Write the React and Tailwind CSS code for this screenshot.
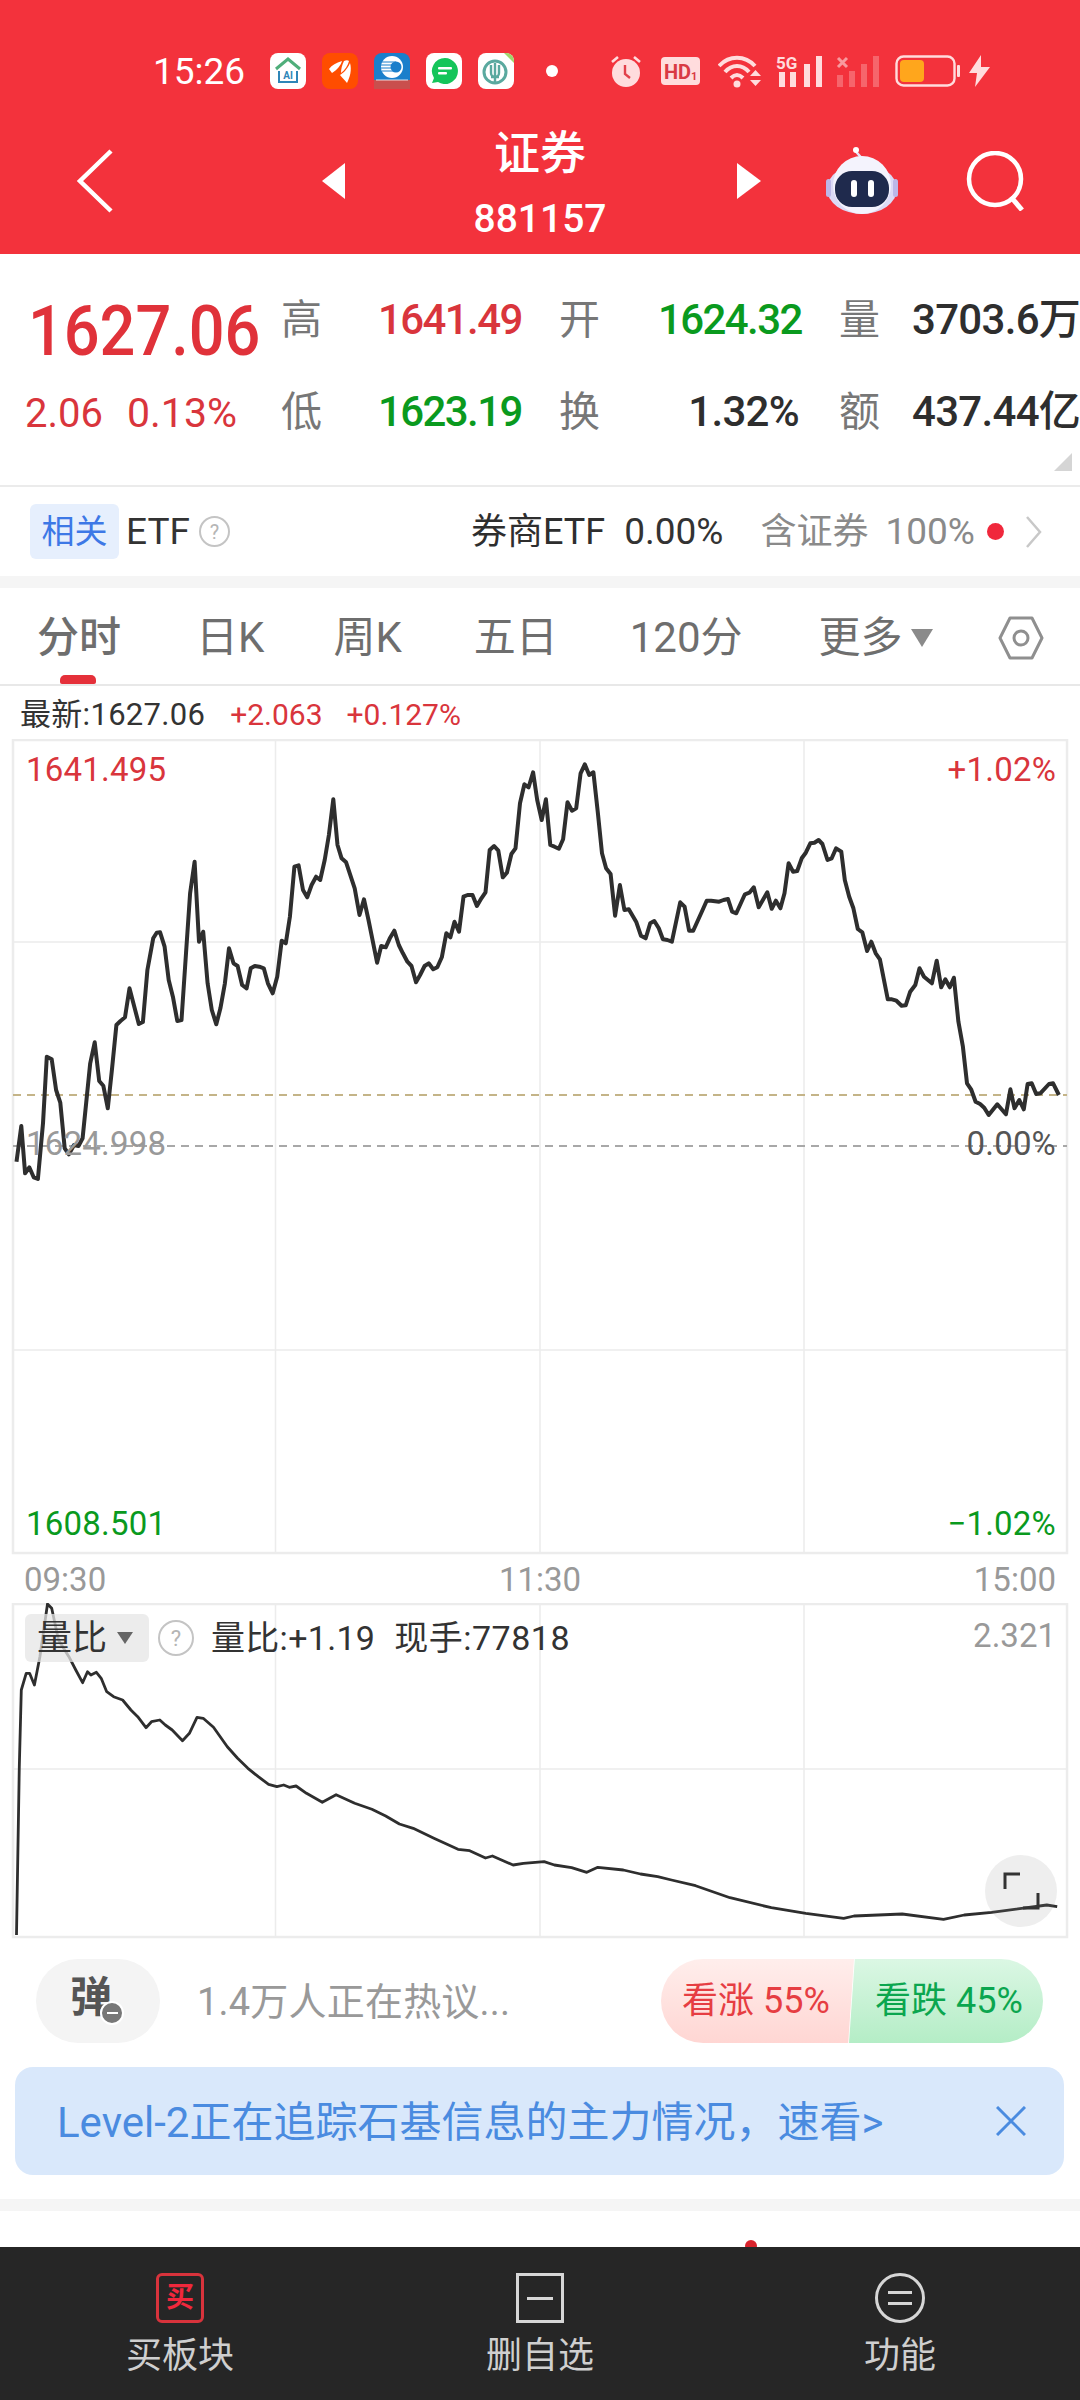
const mainA = [[48,1325],[62,1218],[73,1360],[85,1342],[98,1372],[110,1377],[125,1210],[136,1010],[150,1018],[163,1110],[175,1148],[188,1285],[200,1303],[215,1275],[228,1278],[240,1255],[262,1030],[275,967],[288,1083],[300,1097],[313,1165],[325,1050],[338,915],[350,903],[363,892],[376,805],[390,860],[403,912],[415,906],[428,750],[445,655],[455,638],[465,637],[478,680],[490,780],[502,830],[515,903],[527,900],[540,700],[552,520],[565,425],[578,665],[590,635],[603,790],[615,870],[628,913],[640,865],[653,790],[665,685],[678,730],[690,738],[703,795],[716,805],[728,745],[740,738],[753,740],[766,745],[778,790],[792,820],[805,770],[818,662],[830,670],[842,590],[855,440],[867,436],[880,510],[892,532],[905,495],[918,470],[930,480],[943,420],[955,345],[968,238],[980,375],[992,415],[1005,427],[1030,505],[1044,585],[1057,538],[1070,600],[1095,728],[1107,678],[1120,682],[1132,655],[1145,632],[1158,675],[1170,700],[1183,725],[1195,738],[1208,787],[1220,765],[1233,738],[1245,730],[1258,748],[1270,742],[1283,712],[1296,640],[1308,652],[1320,605],[1333,635],[1346,530],[1358,525],[1372,525],[1385,558],[1398,535],[1410,517],[1422,390],[1435,378],[1447,392],[1460,472],[1472,458],[1485,402],[1497,385],[1510,250],[1523,193],[1535,202],[1548,157],[1560,240]];
const mainB = [[5,300],[17,238],[30,375],[42,380],[55,386],[67,358],[80,247],[93,272],[105,265],[118,160],[130,133],[143,165],[155,157],[168,280],[180,400],[192,445],[205,462],[218,587],[232,495],[245,570],[258,568],[280,607],[293,647],[307,655],[320,610],[332,603],[345,625],[357,658],[370,660],[383,665],[407,547],[420,560],[433,632],[445,632],[470,575],[484,542],[497,542],[520,545],[533,540],[546,537],[558,575],[570,580],[595,523],[608,518],[621,502],[635,562],[660,517],[673,566],[685,542],[698,565],[710,520],[722,430],[735,455],[747,453],[760,415],[772,398],[785,370],[797,368],[809,360],[820,372],[835,420],[847,415],[860,385],[875,395],[885,480],[898,530],[910,565],[923,627],[936,637],[950,693],[962,665],[975,700],[987,718],[1010,838],[1022,838],[1035,842],[1050,857],[1062,856],[1075,815],[1090,795],[1102,745],[1115,770],[1138,790],[1152,722],[1165,802],[1177,778],[1190,802],[1202,773],[1215,905],[1228,980],[1240,1090],[1252,1108],[1265,1145],[1278,1152],[1290,1163],[1303,1185],[1328,1153],[1353,1183],[1366,1108],[1378,1165],[1392,1140],[1405,1168],[1416,1092],[1428,1090],[1441,1122],[1453,1120],[1478,1092],[1490,1090],[1507,1125]];
const lower = [[24,1305],[28,800],[31,570],[38,520],[43,520],[50,555],[58,470],[69,312],[75,325],[85,420],[100,470],[110,510],[120,548],[127,515],[132,525],[140,517],[147,535],[155,575],[165,590],[178,600],[190,630],[200,650],[212,683],[220,665],[232,660],[240,675],[250,690],[265,722],[275,700],[286,652],[295,655],[310,682],[330,740],[345,775],[360,805],[375,830],[390,853],[402,860],[412,855],[420,862],[430,858],[445,880],[468,907],[488,884],[515,910],[540,928],[560,948],[580,972],[600,985],[630,1015],[665,1048],[682,1052],[705,1074],[715,1068],[745,1095],[760,1090],[790,1085],[805,1095],[830,1103],[852,1117],[868,1102],[905,1110],[930,1122],[955,1130],[975,1140],[1010,1157],[1060,1193],[1120,1223],[1170,1240],[1225,1255],[1240,1248],[1310,1242],[1370,1258],[1400,1245],[1440,1237],[1520,1215],[1535,1220]];

const mainPts = [
  ...mainA.map(([x, y]) => `${(x / 2.904).toFixed(1)},${(720 + y / 3).toFixed(1)}`),
  ...mainB.map(([x, y]) => `${(540 + x / 2.904).toFixed(1)},${(720 + y / 3).toFixed(1)}`),
].join(" ");
const lowerPts = lower.map(([x, y]) => `${(x / 1.452).toFixed(1)},${(1500 + y / 3).toFixed(1)}`).join(" ");

function AppIcons() {
  return (
    <div className="flex items-center gap-[16px] ml-[24px]">
      <svg width="36" height="36" viewBox="0 0 36 36">
        <rect width="36" height="36" rx="8" fill="#fff" />
        <path d="M6 16 L18 6 L30 16" fill="none" stroke="#4fae7a" strokeWidth="3" />
        <path d="M9 18v11h18v-11" fill="none" stroke="#2f86b8" strokeWidth="2" />
        <text x="18" y="26" textAnchor="middle" fontSize="10" fontWeight="700" fill="#2f86b8" fontFamily="Roboto">AI</text>
      </svg>
      <svg width="36" height="36" viewBox="0 0 36 36">
        <rect width="36" height="36" rx="8" fill="#ff4d00" />
        <path d="M7 16 C10 12 14 10 20 8 C19 12 15 17 10 20Z M22 8 C24 7 26 7 27 8 C26 12 23 17 19 20 C19 16 20 12 22 8Z M18 22 C21 20 25 17 28 10 C30 17 28 24 25 30 C23 27 20 25 18 22Z" fill="#fff" />
      </svg>
      <svg width="36" height="36" viewBox="0 0 36 36">
        <rect width="36" height="36" rx="8" fill="#1a7fcb" />
        <circle cx="18" cy="14" r="11" fill="#fff" />
        <circle cx="22" cy="14" r="5.500" fill="#1a7fcb" />
        <path d="M8 9h14M7 12h14M7 15h14M8 18h14" stroke="#1a7fcb" strokeWidth="1" />
        <rect y="27" width="36" height="9" fill="#c94f4d" />
        <path d="M2 27h32" stroke="#fff" strokeWidth="0.800" />
      </svg>
      <svg width="36" height="36" viewBox="0 0 36 36">
        <rect width="36" height="36" rx="8" fill="#fff" />
        <path d="M19 5a13 13 0 1 1-7 24l-6 1 2-5a13 13 0 0 1 11-20z" fill="#14c55a" />
        <rect x="12" y="14" width="14" height="2.400" rx="1" fill="#fff" />
        <rect x="12" y="19" width="9" height="2.400" rx="1" fill="#fff" />
      </svg>
      <svg width="36" height="36" viewBox="0 0 36 36">
        <rect width="36" height="36" rx="8" fill="#fff" />
        <circle cx="17" cy="19" r="11" fill="none" stroke="#5aa99f" strokeWidth="3" />
        <path d="M13 12v8a4 4 0 0 0 8 0v-8M17 10v20M13 24h8" fill="none" stroke="#5aa99f" strokeWidth="2.400" />
        <path d="M26 0h2a8 8 0 0 1 8 8v2z" fill="#9fd66b" />
      </svg>
      <div className="w-[12px] h-[12px] rounded-full bg-white ml-[16px]" />
    </div>
  );
}

function StatusRight() {
  const c = "#ffdcdd";
  return (
    <div className="absolute left-[610px] top-[54px] flex items-center h-[34px]">
      <svg width="32" height="34" viewBox="0 0 32 34">
        <path d="M2 8l6-5M30 8l-6-5" stroke={c} strokeWidth="2.600" />
        <circle cx="16" cy="19" r="14" fill={c} />
        <path d="M15 11v9l5 4" fill="none" stroke="#e2404a" strokeWidth="2.400" />
      </svg>
      <svg className="ml-[19px]" width="39" height="28" viewBox="0 0 39 28">
        <rect width="39" height="28" rx="4" fill={c} />
        <text x="3" y="22" fontSize="20" fontWeight="700" fill="#d93a44" fontFamily="Roboto">HD</text>
        <text x="30" y="23" fontSize="11" fontWeight="700" fill="#d93a44" fontFamily="Roboto">1</text>
      </svg>
      <svg className="ml-[18px]" width="44" height="33" viewBox="0 0 44 33">
        <path d="M1 11 C11 0 27 0 37 11 M7 17 C14 9 24 9 31 17 M13 23 C17 19 21 19 25 23" fill="none" stroke={c} strokeWidth="4" />
        <circle cx="19" cy="29" r="3.500" fill={c} />
        <path d="M32 21h11l-5.500-6zM32 25h11l-5.500 6z" fill={c} />
      </svg>
      <svg className="ml-[14px]" width="46" height="32" viewBox="0 0 46 32">
        <text x="0" y="14" fontSize="17" fontWeight="700" fill={c} fontFamily="Roboto">5G</text>
        <rect x="3" y="17" width="6" height="15" fill={c} />
        <rect x="14" y="17" width="6" height="15" fill={c} />
        <rect x="28" y="9" width="6" height="23" fill={c} />
        <rect x="40" y="1" width="6" height="31" fill={c} />
      </svg>
      <svg className="ml-[14px] opacity-50" width="44" height="32" viewBox="0 0 44 32">
        <rect x="1" y="20" width="6" height="12" fill={c} opacity=".6" />
        <rect x="13" y="16" width="6" height="16" fill={c} opacity=".6" />
        <rect x="25" y="9" width="6" height="23" fill={c} opacity=".6" />
        <rect x="37" y="1" width="6" height="31" fill={c} opacity=".6" />
        <path d="M2 3l9 9M11 3l-9 9" stroke="#fff" strokeWidth="3" />
      </svg>
      <svg className="ml-[15px]" width="65" height="32" viewBox="0 0 65 32">
        <rect x="1.500" y="1.500" width="58" height="29" rx="7" fill="none" stroke={c} strokeWidth="2.400" />
        <rect x="5" y="5" width="24" height="22" rx="4" fill="#ffa61c" />
        <rect x="62" y="10" width="3" height="12" rx="1" fill={c} />
      </svg>
      <svg className="ml-[9px]" width="21" height="32" viewBox="0 0 21 32">
        <path d="M12 0L0 18h8l-2 14L21 12h-9z" fill={c} />
      </svg>
    </div>
  );
}

function Robot() {
  return (
    <svg width="72" height="68" viewBox="0 0 72 68">
      <path d="M36 14 C36 8 30 8 30 3" fill="none" stroke="#e6e4f8" strokeWidth="2.500" />
      <circle cx="30" cy="3" r="3" fill="#fff" />
      <ellipse cx="36" cy="42" rx="35" ry="25" fill="#dcdaf6" />
      <rect x="0" y="32" width="5" height="18" rx="2.500" fill="#bcb7e8" />
      <rect x="67" y="32" width="5" height="18" rx="2.500" fill="#bcb7e8" />
      <circle cx="36" cy="38" r="29" fill="#f4f3fd" />
      <rect x="9" y="24" width="54" height="36" rx="17" fill="#1f2a4d" />
      <rect x="25" y="33" width="6" height="17" rx="3" fill="#fff" />
      <rect x="42" y="33" width="6" height="17" rx="3" fill="#fff" />
    </svg>
  );
}

function Header() {
  return (
    <div className="relative h-[254px] bg-[#f3323c] text-white shrink-0">
      <div className="flex items-center h-[36px] absolute top-[53px] left-[153px]">
        <span className="text-[37px] leading-none w-[93px] whitespace-nowrap">15:26</span>
        <AppIcons />
      </div>
      <StatusRight />
      <div className="absolute left-0 right-0 top-[146px] h-[70px] flex items-center">
        <svg className="ml-[75px]" width="40" height="66" viewBox="0 0 40 66">
          <path d="M36 3L5 33l31 30" fill="none" stroke="#fff" strokeWidth="4.500" />
        </svg>
        <svg className="ml-[207px]" width="24" height="36" viewBox="0 0 24 36">
          <path d="M23 0v36L0 18z" fill="#fff" />
        </svg>
        <svg className="ml-[391px]" width="24" height="36" viewBox="0 0 24 36">
          <path d="M0 0v36l24-18z" fill="#fff" />
        </svg>
        <div className="ml-[65px]"><Robot /></div>
        <svg className="ml-[68px]" width="60" height="60" viewBox="0 0 60 60">
          <circle cx="29" cy="28" r="26" fill="none" stroke="#fff" strokeWidth="4.500" />
          <path d="M45 46l11 13" stroke="#fff" strokeWidth="5" />
        </svg>
      </div>
      <div className="absolute left-0 right-0 top-[124px] flex flex-col items-center font-medium">
        <span className="text-[46px] leading-[58px]">证券</span>
        <span className="text-[39px] leading-[48px] mt-[13px]">881157</span>
      </div>
    </div>
  );
}

function Info() {
  const lab = "text-[41px] text-[#777] leading-none";
  const val = "text-[42px] leading-none font-medium whitespace-nowrap text-right";
  const tight = "tracking-[-1.6px]";
  const loose = "tracking-[-0.7px]";
  return (
    <div className="relative h-[231px] flex pt-[20px] shrink-0">
      <div className="w-[281px] pl-[25px]">
        <div className="h-[91px] flex items-center">
          <span className="ml-[3px] text-[70px] leading-none font-medium text-[#e0323a] scale-x-90 origin-left pt-[22px]">1627.06</span>
        </div>
        <div className="h-[92px] flex items-center pt-[5px] text-[40px] leading-none text-[#d9353c]">
          <span>2.06</span>
          <span className="ml-[24px] text-[41px]">0.13%</span>
        </div>
      </div>
      <div className="grid grid-cols-[97px_181px_99px_181px_73px_167px] auto-rows-[92px] items-center">
        <span className={lab}>高</span>
        <span className={`${val} ${tight} pr-[38px] text-[#d9353c]`}>1641.49</span>
        <span className={lab}>开</span>
        <span className={`${val} ${tight} pr-[40px] text-[#0a9a1e]`}>1624.32</span>
        <span className={lab}>量</span>
        <span className={`${val} ${loose} text-[#2e2e2e]`}>3703.6万</span>
        <span className={lab}>低</span>
        <span className={`${val} ${tight} pr-[38px] text-[#0a9a1e]`}>1623.19</span>
        <span className={lab}>换</span>
        <span className={`${val} ${loose} pr-[40px] text-[#2e2e2e]`}>1.32%</span>
        <span className={lab}>额</span>
        <span className={`${val} ${loose} text-[#2e2e2e]`}>437.44亿</span>
      </div>
      <svg className="absolute left-[1054px] top-[199px]" width="18" height="18" viewBox="0 0 18 18">
        <path d="M18 0v18H0z" fill="#d5d5d5" />
      </svg>
    </div>
  );
}

function Etf() {
  return (
    <div className="h-[91px] border-t-2 border-[#ebebeb] flex items-center shrink-0 text-[37px] leading-none">
      <span className="ml-[30px] w-[89px] h-[55px] rounded-[6px] bg-[#e6effd] text-[#3d78e6] flex items-center justify-center text-[33px]">相关</span>
      <span className="ml-[7px] text-[#333]">ETF</span>
      <span className="ml-[9px] w-[31px] h-[31px] rounded-full border-2 border-[#c4c4c4] text-[#b5b5b5] text-[20px] flex items-center justify-center">?</span>
      <span className="ml-[241px] text-[36px] text-[#2e2e2e] whitespace-nowrap">券商ETF</span>
      <span className="ml-[19px] text-[#333]">0.00%</span>
      <span className="ml-[37px] text-[36px] text-[#8a8a8a]">含证券</span>
      <span className="ml-[17px] text-[#8a8a8a]">100%</span>
      <span className="ml-[12px] w-[17px] h-[17px] rounded-full bg-[#f0283c]" />
      <svg className="ml-[21px]" width="18" height="34" viewBox="0 0 18 34">
        <path d="M2 2l13 15L2 32" fill="none" stroke="#c8c8c8" strokeWidth="2.500" />
      </svg>
    </div>
  );
}

function Tabs() {
  const t = "text-[42px] leading-none text-[#6e6e6e] whitespace-nowrap";
  return (
    <div className="relative h-[98px] border-b-2 border-[#e8e8e8] flex items-center pt-[3px] shrink-0">
      <span className={`${t} ml-[37px] text-[#2a2a2a] font-medium`}>分时</span>
      <span className={`${t} ml-[75px]`}>日K</span>
      <span className={`${t} ml-[69px]`}>周K</span>
      <span className={`${t} ml-[72px]`}>五日</span>
      <span className={`${t} ml-[72px]`}>120分</span>
      <span className={`${t} ml-[76px]`}>更多</span>
      <svg className="ml-[8px]" width="22" height="18" viewBox="0 0 22 18">
        <path d="M0 0h22L11 18z" fill="#8a8a8a" />
      </svg>
      <svg className="ml-[65px]" width="46" height="46" viewBox="0 0 46 46">
        <path d="M12 3h22l10 20-10 20H12L2 23z" fill="none" stroke="#8f8f8f" strokeWidth="3" strokeLinejoin="round" />
        <circle cx="23" cy="23" r="7" fill="none" stroke="#8f8f8f" strokeWidth="3" />
      </svg>
      <span className="absolute left-[60px] bottom-0 w-[36px] h-[9px] rounded-t-[5px] rounded-b-[2px] bg-[#e5303a]" />
    </div>
  );
}

function MainChart() {
  const n = "absolute text-[33px] leading-[36px] tracking-[0.2px]";
  return (
    <div className="relative h-[816px] shrink-0">
      <svg className="absolute inset-0" width="1080" height="816" viewBox="0 739 1080 816">
        <g stroke="#ececec" strokeWidth="1.500" fill="none">
          <rect x="13" y="740" width="1054" height="813" strokeWidth="2.500" />
          <path d="M275.500 740V1553M540 740V1553M804 740V1553M13 942H1067M13 1350H1067" />
        </g>
        <path d="M13 1095H1067" stroke="#c4b488" strokeWidth="2" strokeDasharray="8 6" />
        <path d="M13 1146H1067" stroke="#a8a8a8" strokeWidth="2" strokeDasharray="8 6" />
        <polyline points={mainPts} fill="none" stroke="#2e2e2e" strokeWidth="4" strokeLinejoin="round" />
      </svg>
      <span className={`${n} left-[26px] top-[13px] text-[#d9353c]`}>1641.495</span>
      <span className={`${n} right-[24px] top-[13px] text-[#d9353c]`}>+1.02%</span>
      <span className={`${n} left-[26px] top-[387px] text-[#999]`}>1624.998</span>
      <span className={`${n} right-[24px] top-[387px] text-[#555]`}>0.00%</span>
      <span className={`${n} left-[26px] top-[767px] text-[#0a9a1e]`}>1608.501</span>
      <span className={`${n} right-[24px] top-[767px] text-[#0a9a1e]`}>−1.02%</span>
    </div>
  );
}

function LowerChart() {
  return (
    <div className="relative h-[336px] shrink-0">
      <svg className="absolute inset-0" width="1080" height="336" viewBox="0 1603 1080 336">
        <g stroke="#ececec" strokeWidth="1.500" fill="none">
          <rect x="13" y="1604" width="1054" height="333" strokeWidth="2.500" />
          <path d="M275.500 1604V1937M540 1604V1937M804 1604V1937M13 1769H1067" />
        </g>
        <polyline points={lowerPts} fill="none" stroke="#2e2e2e" strokeWidth="2.800" strokeLinejoin="round" />
      </svg>
      <div className="absolute left-[25px] top-[11px] flex items-center">
        <div className="w-[124px] h-[48px] rounded-[6px] bg-[#e5e5e5]/75 flex items-center pl-[12px] text-[35px] leading-none text-[#333]">
          <span>量比</span>
          <svg className="ml-[10px]" width="16" height="12" viewBox="0 0 16 12"><path d="M0 0h16L8 12z" fill="#666" /></svg>
        </div>
        <span className="ml-[9px] w-[36px] h-[36px] rounded-full border-2 border-[#c4c4c4] text-[#b5b5b5] text-[22px] flex items-center justify-center">?</span>
        <span className="ml-[17px] text-[34px] leading-none tracking-[0.3px] text-[#333] whitespace-nowrap">量比:+1.19</span>
        <span className="ml-[19px] text-[34px] leading-none tracking-[0.5px] text-[#333] whitespace-nowrap">现手:77818</span>
      </div>
      <span className="absolute right-[24px] top-[15px] text-[33px] leading-[36px] text-[#999]">2.321</span>
      <div className="absolute left-[985px] top-[252px] w-[72px] h-[72px] rounded-full bg-[#8c8c8c]/15">
        <svg width="72" height="72" viewBox="0 0 72 72">
          <path d="M20 34V19h15M53 38v15H38" fill="none" stroke="#333" strokeWidth="3" />
        </svg>
      </div>
    </div>
  );
}

function Vote() {
  return (
    <div className="h-[128px] flex items-start pt-[20px] shrink-0">
      <div className="relative ml-[36px] w-[124px] h-[84px] rounded-full bg-[#f4f4f4] flex items-center justify-center">
        <span className="text-[42px] font-bold text-[#555] leading-none -ml-[14px] -mt-[6px]">弹</span>
        <span className="absolute left-[64px] top-[42px] w-[24px] h-[24px] rounded-full bg-[#777] border-2 border-white flex items-center justify-center">
          <span className="w-[11px] h-[2px] bg-white" />
        </span>
      </div>
      <span className="ml-[37px] mt-[24px] text-[38px] leading-none tracking-[0.2px] text-[#999] whitespace-nowrap">1.4万人正在热议...</span>
      <div className="absolute left-[661px] flex h-[84px] text-[36px] leading-none">
        <div className="w-[193px] h-full rounded-l-[42px] bg-gradient-to-b from-[#ffeeec] to-[#ffd6d3] [clip-path:polygon(0_0,100%_0,97%_100%,0_100%)] flex items-center pl-[21px] text-[#e63d42] whitespace-nowrap">看涨 55%</div>
        <div className="-ml-[5px] w-[194px] h-full rounded-r-[42px] bg-gradient-to-b from-[#dbf7e4] to-[#b4edc6] [clip-path:polygon(3%_0,100%_0,100%_100%,0_100%)] flex items-center pl-[26px] text-[#0ba64f] whitespace-nowrap">看跌 45%</div>
      </div>
    </div>
  );
}

function Banner() {
  return (
    <div className="mx-[15px] h-[108px] w-[1049px] rounded-[18px] bg-[#d9e8fb] flex items-center pl-[42px] shrink-0">
      <span className="text-[42px] leading-none pt-[3px] text-[#4a8be0] whitespace-nowrap">Level-2正在追踪石基信息的主力情况，速看&gt;</span>
      <svg className="ml-auto mr-[38px]" width="30" height="30" viewBox="0 0 30 30">
        <path d="M1 1l28 28M29 1L1 29" stroke="#4a8be0" strokeWidth="3" />
      </svg>
    </div>
  );
}

function BottomBar() {
  const l = "mt-[15px] text-[36px] leading-none text-[#cfcfcf] whitespace-nowrap";
  return (
    <div className="h-[153px] bg-[#262626] grid grid-cols-3 shrink-0 relative">
      <div className="flex flex-col items-center pt-[26px]">
        <div className="w-[48px] h-[50px] rounded-[6px] border-[3px] border-[#d8333c] flex items-center justify-center text-[28px] leading-none font-bold text-[#f0283c]">买</div>
        <span className={l}>买板块</span>
      </div>
      <div className="flex flex-col items-center pt-[26px]">
        <div className="w-[48px] h-[50px] border-[3px] border-[#d6d6d6] flex items-center justify-center">
          <span className="w-[26px] h-[3px] bg-[#d6d6d6]" />
        </div>
        <span className={l}>删自选</span>
      </div>
      <div className="flex flex-col items-center pt-[26px]">
        <div className="w-[50px] h-[50px] rounded-full border-[3px] border-[#d6d6d6] flex flex-col items-center justify-center gap-[8px]">
          <span className="w-[24px] h-[3px] bg-[#d6d6d6]" />
          <span className="w-[24px] h-[3px] bg-[#d6d6d6]" />
        </div>
        <span className={l}>功能</span>
      </div>
    </div>
  );
}

export default function App() {
  return (
    <div className="relative w-[1080px] h-[2400px] overflow-hidden bg-white flex flex-col font-['Roboto','Noto_Sans_CJK_SC',sans-serif]">
      <Header />
      <Info />
      <Etf />
      <div className="h-[12px] bg-[#f5f5f5] shrink-0" />
      <Tabs />
      <div className="h-[53px] flex items-start pt-[14px] pl-[20px] whitespace-nowrap shrink-0 leading-[30px]">
        <span className="text-[31px] tracking-[0.3px] text-[#333]">最新:1627.06</span>
        <span className="ml-[25px] text-[30px] text-[#d9353c]">+2.063</span>
        <span className="ml-[24px] text-[30px] text-[#d9353c]">+0.127%</span>
      </div>
      <MainChart />
      <div className="h-[48px] flex justify-between items-start pt-[7px] px-[24px] text-[33px] leading-[36px] text-[#999] shrink-0">
        <span>09:30</span>
        <span>11:30</span>
        <span>15:00</span>
      </div>
      <LowerChart />
      <Vote />
      <Banner />
      <div className="h-[24px] shrink-0" />
      <div className="h-[12px] bg-[#f5f5f5] shrink-0" />
      <div className="h-[36px] shrink-0 relative">
        <span className="absolute left-[745px] top-[29px] w-[12px] h-[12px] rounded-full bg-[#d8232c]" />
      </div>
      <BottomBar />
    </div>
  );
}
